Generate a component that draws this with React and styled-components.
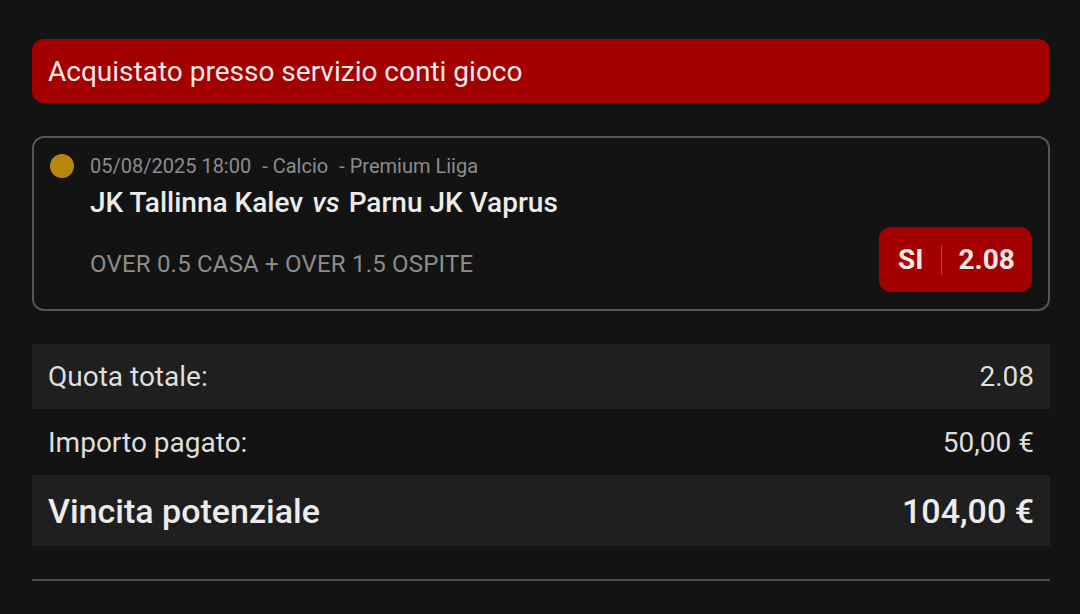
import React from "react";
import styled, { createGlobalStyle } from "styled-components";

const Global = createGlobalStyle`
  html, body { margin: 0; padding: 0; background: #131313; }
  body { font-family: Roboto, "Noto Sans", sans-serif; color: #e6e6e6; }
`;

const Page = styled.div`
  width: 1080px;
  height: 614px;
  box-sizing: border-box;
  padding: 39px 30px 0 32px;
  display: flex;
  flex-direction: column;
  overflow: hidden;
`;

const Banner = styled.div`
  height: 64px;
  background: #a30000;
  border-radius: 12px;
  display: flex;
  align-items: center;
  padding: 0 16px;
  font-size: 28px;
  color: #f4eaea;
`;

const Card = styled.div`
  margin-top: 33px;
  height: 175px;
  box-sizing: border-box;
  border: 2px solid #555;
  border-radius: 12px;
  padding: 14px 16px 0 16px;
  display: flex;
`;

const Dot = styled.div`
  width: 24px;
  height: 24px;
  border-radius: 50%;
  background: #b8860b;
  flex: none;
  margin-top: 2px;
  margin-right: 16px;
`;

const Info = styled.div`
  display: flex;
  flex-direction: column;
  flex: 1;
`;

const Meta = styled.div`
  font-size: 20px;
  color: #8c8c8c;
  line-height: 28px;
  span { margin-left: 11px; }
`;

const Teams = styled.div`
  font-size: 28px;
  font-weight: 500;
  color: #ececec;
  line-height: 36px;
  margin-top: 5px;
  em { font-style: italic; margin: 0 9px; }
`;

const BottomRow = styled.div`
  display: flex;
  justify-content: space-between;
  align-items: center;
  margin-top: 6px;
`;

const Market = styled.div`
  font-size: 24px;
  color: #8c8c8c;
  padding-top: 8px;
  letter-spacing: 0.2px;
`;

const OddButton = styled.div`
  height: 65px;
  width: 153px;
  box-sizing: border-box;
  background: #a30000;
  border-radius: 12px;
  display: flex;
  align-items: center;
  justify-content: center;
  gap: 17px;
  padding-left: 2px;
  font-size: 28px;
  font-weight: 700;
  color: #f2e6e6;
`;

const Sep = styled.div`
  width: 1px;
  height: 30px;
  background: #c04545;
`;

const Summary = styled.div`
  margin-top: 33px;
  display: flex;
  flex-direction: column;
`;

const Row = styled.div`
  height: ${(p) => p.h}px;
  background: ${(p) => (p.shaded ? "#1f1f1f" : "transparent")};
  display: flex;
  align-items: center;
  justify-content: space-between;
  padding: 0 16px;
  font-size: ${(p) => (p.big ? 34 : 28)}px;
  font-weight: ${(p) => (p.big ? 500 : 400)};
  color: ${(p) => (p.big ? "#ececec" : "#dedede")};
`;

const Divider = styled.div`
  margin-top: 33px;
  height: 2px;
  background: #4a4a4a;
`;

export default function App() {
  return (
    <>
      <Global />
      <Page>
        <Banner>Acquistato presso servizio conti gioco</Banner>
        <Card>
          <Dot />
          <Info>
            <Meta>
              05/08/2025 18:00<span>- Calcio</span><span>- Premium Liiga</span>
            </Meta>
            <Teams>
              JK Tallinna Kalev<em>vs</em>Parnu JK Vaprus
            </Teams>
            <BottomRow>
              <Market>OVER 0.5 CASA + OVER 1.5 OSPITE</Market>
              <OddButton>
                <span>SI</span>
                <Sep />
                <span>2.08</span>
              </OddButton>
            </BottomRow>
          </Info>
        </Card>
        <Summary>
          <Row shaded h={65}>
            <span>Quota totale:</span>
            <span>2.08</span>
          </Row>
          <Row h={66}>
            <span>Importo pagato:</span>
            <span>50,00 €</span>
          </Row>
          <Row shaded big h={71}>
            <span>Vincita potenziale</span>
            <span>104,00 €</span>
          </Row>
        </Summary>
        <Divider />
      </Page>
    </>
  );
}
